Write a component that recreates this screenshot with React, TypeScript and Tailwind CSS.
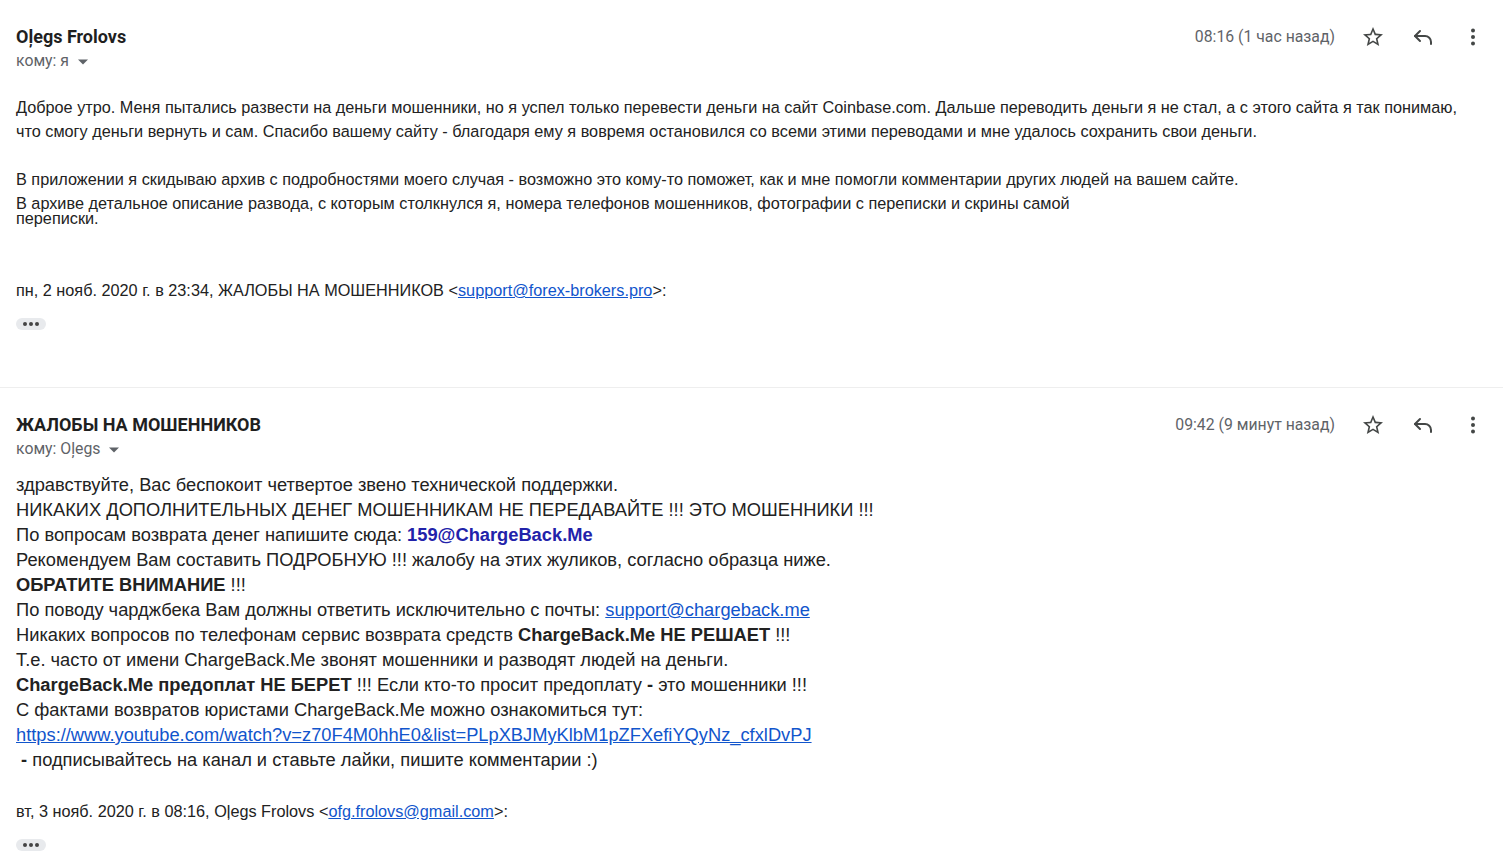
import React from "react";

const Star = () => (
  <svg width="24" height="24" viewBox="0 0 24 24" fill="#444746">
    <path d="M22 9.24l-7.19-.62L12 2 9.19 8.63 2 9.24l5.46 4.73L5.82 21 12 17.27 18.18 21l-1.63-7.03L22 9.24zM12 15.4l-3.76 2.27 1-4.28-3.32-2.88 4.38-.38L12 6.1l1.71 4.04 4.38.38-3.32 2.88 1 4.28L12 15.4z" />
  </svg>
);

const Reply = () => (
  <svg width="24" height="24" viewBox="0 0 24 24" fill="none" stroke="#444746" strokeWidth="2" strokeLinecap="round" strokeLinejoin="round">
    <polyline points="9 16 4 11 9 6" />
    <path d="M20 19v-2a6 6 0 0 0-6-6H4" />
  </svg>
);

const More = () => (
  <svg width="24" height="24" viewBox="0 0 24 24" fill="#444746">
    <circle cx="12" cy="5.5" r="2" />
    <circle cx="12" cy="12" r="2" />
    <circle cx="12" cy="18.5" r="2" />
  </svg>
);

const Caret = () => (
  <svg width="10" height="6" viewBox="0 0 10 5" fill="#5f6368" className="ml-[9px] mt-[2px]">
    <path d="M0 0l5 5 5-5z" />
  </svg>
);

const Dots = () => (
  <div className="flex h-[12px] w-[30px] items-center justify-center gap-[2px] rounded-[6px] bg-[#e8eaed]">
    <span className="h-[4px] w-[4px] rounded-full bg-[#444]" />
    <span className="h-[4px] w-[4px] rounded-full bg-[#444]" />
    <span className="h-[4px] w-[4px] rounded-full bg-[#444]" />
  </div>
);

const Header = ({ name, to, time }: { name: string; to: string; time: string }) => (
  <div className="flex items-start justify-between">
    <div className="flex flex-col">
      <div className="text-[18px] font-bold leading-[26px] text-[#1f1f1f]" style={{ fontFamily: "Roboto, sans-serif" }}>
        {name}
      </div>
      <div className="flex items-center text-[15.8px] leading-[22px] text-[#5f6368]" style={{ fontFamily: "Roboto, sans-serif" }}>
        {to}
        <Caret />
      </div>
    </div>
    <div className="flex h-[26px] items-center">
      <span className="mr-[13px] text-[15.8px] text-[#5f6368]" style={{ fontFamily: "Roboto, sans-serif" }}>
        {time}
      </span>
      <div className="flex w-[50px] justify-center"><Star /></div>
      <div className="flex w-[50px] justify-center"><Reply /></div>
      <div className="flex w-[50px] justify-center"><More /></div>
    </div>
  </div>
);

export default function App() {
  const arial = { fontFamily: '"Liberation Sans", Arial, sans-serif' };
  return (
    <div className="min-h-[864px] w-[1503px] bg-white">
      <div className="pl-[16px] pt-[24px] pr-[5px]">
        <Header name="Oļegs Frolovs" to="кому: я" time="08:16 (1 час назад)" />
        <div className="mt-[23px] text-[16.25px] text-[#222]" style={arial}>
          <p className="leading-[24px]">
            Доброе утро. Меня пытались развести на деньги мошенники, но я успел только перевести деньги на сайт Coinbase.com. Дальше переводить деньги я не стал, а с этого сайта я так понимаю,
            <br />
            что смогу деньги вернуть и сам. Спасибо вашему сайту - благодаря ему я вовремя остановился со всеми этими переводами и мне удалось сохранить свои деньги.
          </p>
          <p className="mt-[24px] leading-[24px]">
            В приложении я скидываю архив с подробностями моего случая - возможно это кому-то поможет, как и мне помогли комментарии других людей на вашем сайте.
          </p>
          <p className="pt-[5px] leading-[15px]">
            В архиве детальное описание развода, с которым столкнулся я, номера телефонов мошенников, фотографии с переписки и скрины самой
            <br />
            переписки.
          </p>
          <p className="mt-[52px] leading-[24px]">
            пн, 2 нояб. 2020 г. в 23:34, ЖАЛОБЫ НА МОШЕННИКОВ &lt;
            <a className="text-[#1155cc] underline">support@forex-brokers.pro</a>&gt;:
          </p>
          <div className="mt-[16px]">
            <Dots />
          </div>
        </div>
      </div>
      <div className="mt-[57px] h-[1px] w-full bg-[#eeeeee]" />
      <div className="pl-[16px] pt-[24px] pr-[5px]">
        <Header name="ЖАЛОБЫ НА МОШЕННИКОВ" to="кому: Oļegs" time="09:42 (9 минут назад)" />
        <div className="mt-[12px] text-[18.3px] leading-[25px] text-[#222]" style={arial}>
          <div>здравствуйте, Вас беспокоит четвертое звено технической поддержки.</div>
          <div>НИКАКИХ ДОПОЛНИТЕЛЬНЫХ ДЕНЕГ МОШЕННИКАМ НЕ ПЕРЕДАВАЙТЕ !!! ЭТО МОШЕННИКИ !!!</div>
          <div>
            По вопросам возврата денег напишите сюда: <b className="text-[#2222aa]">159@ChargeBack.Me</b>
          </div>
          <div>Рекомендуем Вам составить ПОДРОБНУЮ !!! жалобу на этих жуликов, согласно образца ниже.</div>
          <div>
            <b>ОБРАТИТЕ ВНИМАНИЕ</b> !!!
          </div>
          <div>
            По поводу чарджбека Вам должны ответить исключительно с почты:{" "}
            <a className="text-[#1155cc] underline">support@chargeback.me</a>
          </div>
          <div>
            Никаких вопросов по телефонам сервис возврата средств <b>ChargeBack.Me НЕ РЕШАЕТ</b> !!!
          </div>
          <div>Т.е. часто от имени ChargeBack.Me звонят мошенники и разводят людей на деньги.</div>
          <div>
            <b>ChargeBack.Me предоплат НЕ БЕРЕТ</b> !!! Если кто-то просит предоплату <b>-</b> это мошенники !!!
          </div>
          <div>С фактами возвратов юристами ChargeBack.Me можно ознакомиться тут:</div>
          <div>
            <a className="text-[#1155cc] underline">https://www.youtube.com/watch?v=z70F4M0hhE0&amp;list=PLpXBJMyKlbM1pZFXefiYQyNz_cfxlDvPJ</a>
          </div>
          <div>
            &nbsp;<b>-</b> подписывайтесь на канал и ставьте лайки, пишите комментарии :)
          </div>
        </div>
        <div className="mt-[27px] text-[16.25px] leading-[24px] text-[#222]" style={arial}>
          вт, 3 нояб. 2020 г. в 08:16, Oļegs Frolovs &lt;
          <a className="text-[#1155cc] underline">ofg.frolovs@gmail.com</a>&gt;:
        </div>
        <div className="mt-[16px]">
          <Dots />
        </div>
      </div>
    </div>
  );
}
